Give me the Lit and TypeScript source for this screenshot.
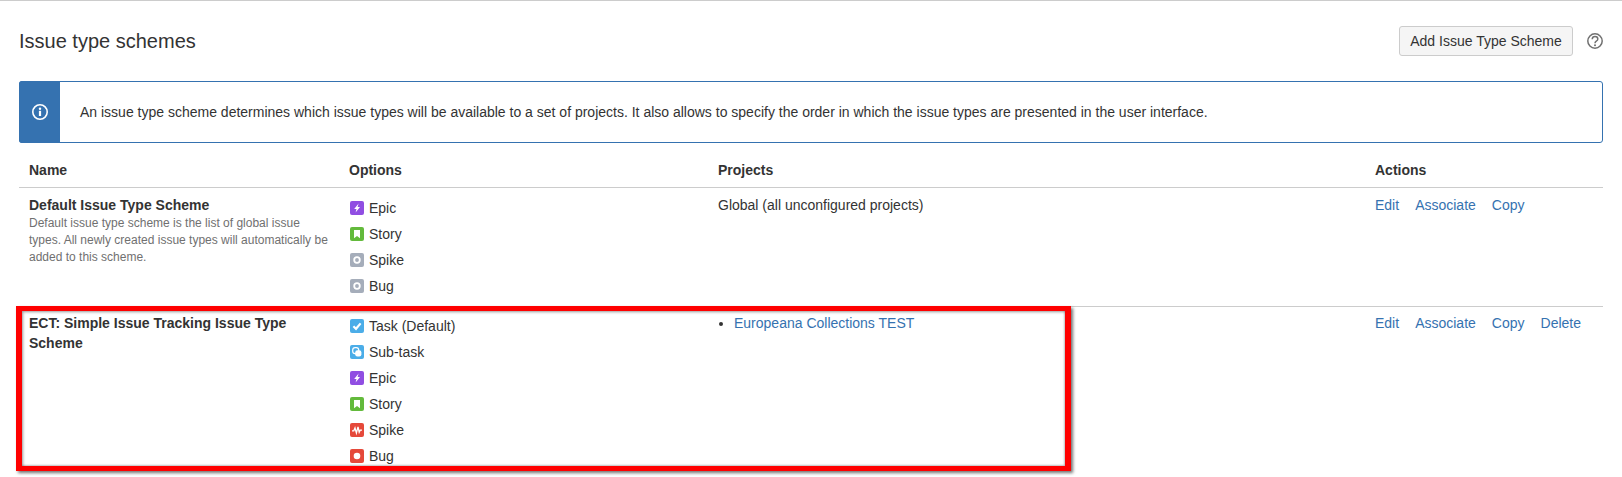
import { LitElement, html, css, svg } from "lit";
import { customElement } from "lit/decorators.js";

const icons: Record<string, { bg: string; glyph: unknown }> = {
  epic: { bg: "#904ee2", glyph: svg`<path d="M8.600 2.400 4.200 7.900h2.300L5.600 11.600 10 6.100H7.600z" fill="#fff"/>` },
  story: { bg: "#63ba3c", glyph: svg`<path d="M4 3h6v8.200L7 9l-3 2.200z" fill="#fff"/>` },
  grey: { bg: "#a5adba", glyph: svg`<circle cx="7" cy="7" r="2.800" fill="none" stroke="#fff" stroke-width="1.800"/>` },
  task: { bg: "#4bade8", glyph: svg`<path d="M3.400 7.200 6 9.800l4.600-5.400" fill="none" stroke="#fff" stroke-width="2.200"/>` },
  sub: { bg: "#4bade8", glyph: svg`<rect x="2.700" y="2.700" width="6" height="6" rx="2.400" fill="#4bade8" stroke="#fff" stroke-width="1.200"/><rect x="5.200" y="5.200" width="6.200" height="6.200" rx="2.200" fill="#fff"/>` },
  spike: { bg: "#e5493a", glyph: svg`<path d="M2 7.800h1.800L5 5l1.400 5L8 3.800l1.200 5.400 1-2H12" fill="none" stroke="#fff" stroke-width="1.300"/>` },
  bug: { bg: "#e5493a", glyph: svg`<circle cx="7" cy="7" r="3.300" fill="#fff"/>` },
};

const issueIcon = (k: string) => svg`<svg class="ico" width="14" height="14" viewBox="0 0 14 14"><rect width="14" height="14" rx="2" fill=${icons[k].bg}/>${icons[k].glyph}</svg>`;

const opt = (k: string, t: string) => html`<div class="opt">${issueIcon(k)}<span>${t}</span></div>`;

@customElement("app-root")
export class AppRoot extends LitElement {
  static styles = css`
    :host {
      display: block;
      position: relative;
      height: 477px;
      box-sizing: border-box;
      overflow: hidden;
      border-top: 1px solid #ccc;
      padding: 0 19px;
      background: #fff;
      color: #333;
      font: 14px/20px "Liberation Sans", Arial, sans-serif;
    }
    .head { display: flex; align-items: center; padding-top: 25px; margin-bottom: 25px; height: 30px; }
    h1 { flex: 1; margin: 0; font-size: 20px; font-weight: 400; line-height: 30px; }
    .btn {
      box-sizing: border-box; height: 30px; width: 174px; padding: 0;
      background: #f5f5f5; border: 1px solid #ccc; border-radius: 3px;
      color: #333; font: inherit; text-align: center;
    }
    .help { margin-left: 14px; display: block; }
    .msg {
      box-sizing: border-box; height: 62px; display: flex; align-items: center;
      border: 1px solid #3572b0; border-radius: 3px;
    }
    .msg-ico {
      align-self: stretch; margin: -1px 0 -1px -1px; background: #3572b0;
      border-radius: 3px 0 0 3px; display: flex; align-items: center; justify-content: center;
      flex: none; width: 41px;
    }
    .msg p { margin: 0 0 0 20px; }
    table { width: 1584px; table-layout: fixed; border-collapse: collapse; }
    th { text-align: left; font-weight: 700; padding: 17px 10px 7px; border-bottom: 1px solid #ccc; }
    td { vertical-align: top; padding: 7px 10px; }
    tr.sep td { border-bottom: 1px solid #ccc; }
    tr.last td { padding-top: 6px; }
    .name { font-weight: 700; }
    .desc { font-size: 12px; line-height: 17px; color: #707070; }
    .opt { display: flex; align-items: center; height: 26px; gap: 5px; }
    .ico { display: block; margin-left: 1px; flex: none; }
    ul { margin: 0; padding: 0 0 0 16px; }
    a { color: #3572b0; text-decoration: none; }
    .acts { display: flex; gap: 16px; }
    .mark {
      position: absolute; left: 16px; top: 305px; width: 1055px; height: 165px;
      box-sizing: border-box; border: solid #f00; border-width: 5px 6px;
      box-shadow: 2px 2px 3px rgba(0,0,0,.55), inset 1px 1px 3px rgba(0,0,0,.4), inset -1px -1px 2px rgba(0,0,0,.2);
      pointer-events: none;
    }
  `;

  render() {
    return html`
      <div class="head">
        <h1>Issue type schemes</h1>
        <button class="btn">Add Issue Type Scheme</button>
        <svg class="help" width="16" height="16" viewBox="0 0 16 16">
          <circle cx="8" cy="8" r="7.200" fill="none" stroke="#707070" stroke-width="1.500"/>
          <path d="M5.200 6.200C5.300 4.500 6.500 3.500 8 3.500c1.700 0 2.800 1 2.800 2.400 0 1.200-.7 1.800-1.500 2.300-.8.500-1.300 1-1.300 2" fill="none" stroke="#707070" stroke-width="1.500"/>
          <circle cx="8" cy="12.300" r="1" fill="#707070"/>
        </svg>
      </div>
      <div class="msg">
        <div class="msg-ico">
          <svg width="16" height="16" viewBox="0 0 16 16">
            <circle cx="8" cy="8" r="7.200" fill="none" stroke="#fff" stroke-width="1.600"/>
            <circle cx="8" cy="4.700" r="1.200" fill="#fff"/>
            <rect x="6.900" y="6.800" width="2.200" height="5.200" fill="#fff"/>
          </svg>
        </div>
        <p>An issue type scheme determines which issue types will be available to a set of projects. It also allows to specify the order in which the issue types are presented in the user interface.</p>
      </div>
      <table>
        <colgroup>
          <col style="width:320px" /><col style="width:369px" /><col style="width:657px" /><col style="width:238px" />
        </colgroup>
        <thead>
          <tr><th>Name</th><th>Options</th><th>Projects</th><th>Actions</th></tr>
        </thead>
        <tbody>
          <tr class="sep">
            <td>
              <div class="name">Default Issue Type Scheme</div>
              <div class="desc">Default issue type scheme is the list of global issue types. All newly created issue types will automatically be added to this scheme.</div>
            </td>
            <td>${opt("epic", "Epic")}${opt("story", "Story")}${opt("grey", "Spike")}${opt("grey", "Bug")}</td>
            <td>Global (all unconfigured projects)</td>
            <td><div class="acts"><a href="#">Edit</a><a href="#">Associate</a><a href="#">Copy</a></div></td>
          </tr>
          <tr class="last">
            <td><div class="name">ECT: Simple Issue Tracking Issue Type Scheme</div></td>
            <td>${opt("task", "Task (Default)")}${opt("sub", "Sub-task")}${opt("epic", "Epic")}${opt("story", "Story")}${opt("spike", "Spike")}${opt("bug", "Bug")}</td>
            <td><ul><li><a href="#">Europeana Collections TEST</a></li></ul></td>
            <td><div class="acts"><a href="#">Edit</a><a href="#">Associate</a><a href="#">Copy</a><a href="#">Delete</a></div></td>
          </tr>
        </tbody>
      </table>
      <div class="mark"></div>
    `;
  }
}
